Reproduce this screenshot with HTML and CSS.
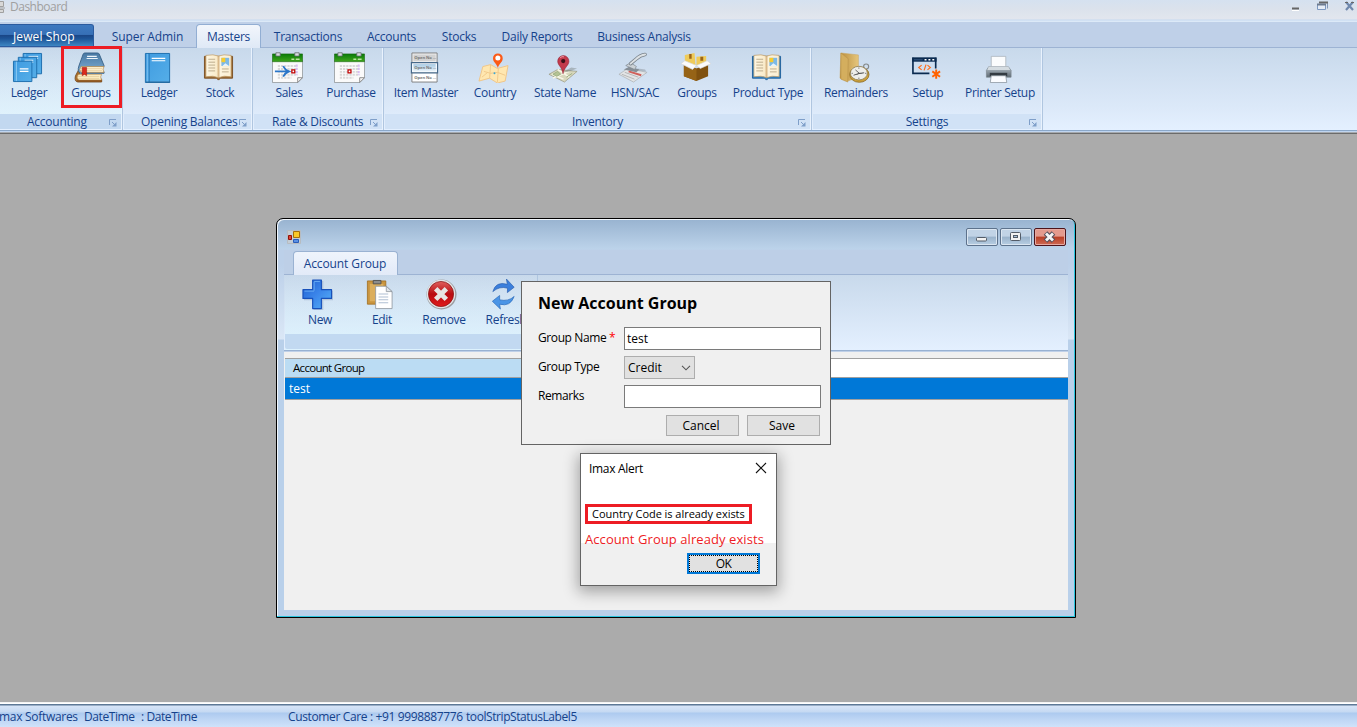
FILE: index.html
```html
<!DOCTYPE html>
<html lang="en">
<head>
<meta charset="utf-8">
<title>Dashboard</title>
<link rel="stylesheet" href="styles.css">
</head>
<body>
<svg class="defs" width="0" height="0">
  <defs>
    <linearGradient id="gBlue" x1="0" y1="0" x2="1" y2="1"><stop offset="0" stop-color="#3f9be0"/><stop offset="1" stop-color="#55aee8"/></linearGradient>
    <linearGradient id="gCover" x1="0" y1="0" x2="0" y2="1"><stop offset="0" stop-color="#4878a3"/><stop offset="1" stop-color="#7fadd2"/></linearGradient>
    <linearGradient id="gGreen" x1="0" y1="0" x2="0" y2="1"><stop offset="0" stop-color="#087b08"/><stop offset="1" stop-color="#3fa51c"/></linearGradient>
    <linearGradient id="gPlus" x1="0" y1="0" x2="1" y2="1"><stop offset="0" stop-color="#1d5fd0"/><stop offset=".5" stop-color="#3c86ea"/><stop offset="1" stop-color="#57b3f8"/></linearGradient>
    <linearGradient id="gFolder" x1="0" y1="0" x2="1" y2="0"><stop offset="0" stop-color="#b98d3c"/><stop offset="1" stop-color="#e6c67c"/></linearGradient>
    <linearGradient id="gMetal" x1="0" y1="0" x2="0" y2="1"><stop offset="0" stop-color="#b9c4cd"/><stop offset="1" stop-color="#5d6973"/></linearGradient>
    <linearGradient id="gRed" x1="0" y1="0" x2="0" y2="1"><stop offset="0" stop-color="#e0605c"/><stop offset=".5" stop-color="#b80c10"/><stop offset="1" stop-color="#e01a1c"/></linearGradient>
    <linearGradient id="gPage" x1="0" y1="0" x2="1" y2="0"><stop offset="0" stop-color="#fdf6e3"/><stop offset=".42" stop-color="#faeccb"/><stop offset=".5" stop-color="#d9b98a"/><stop offset=".58" stop-color="#fdf4de"/><stop offset="1" stop-color="#fbeed2"/></linearGradient>
    <linearGradient id="gCell" x1="0" y1="0" x2="0" y2="1"><stop offset="0" stop-color="#a9cbe4"/><stop offset="1" stop-color="#e4f0f9"/></linearGradient>
  </defs>
  <symbol id="i-ledgers" viewBox="0 0 32 32">
    <g stroke="#1f6fae" fill="url(#gBlue)">
      <path d="M11.500 1.500H30.500V22.500H11.500z"/><path d="M13.500 2v20" stroke="#8fcbf4" stroke-width=".8"/><path d="M17 4.500h10M17 6.500h10" stroke="#e8f6ff"/>
      <path d="M6.500 5.500H25.500V26.500H6.500z"/><path d="M8.500 6v20" stroke="#8fcbf4" stroke-width=".8"/><path d="M13 8.500h9M13 10.500h9" stroke="#e8f6ff"/>
      <path d="M1.500 9.500H20.500V30.500H1.500z"/><path d="M4.500 10v20" stroke="#8fcbf4"/><path d="M8 17.500h9M8 20h9" stroke="#fff" stroke-width="1.300"/>
    </g>
  </symbol>
  <symbol id="i-ledger" viewBox="0 0 32 32">
    <path d="M3.500 1.500h25v30h-25z" fill="url(#gBlue)" stroke="#1f6fae"/><path d="M7.500 2v29" stroke="#2f7fbd"/><path d="M5.500 2v29" stroke="#7cc0ef"/>
    <path d="M10 6.500h14M10 9h14" stroke="#fff" stroke-width="1.200"/><path d="M4 31h25" stroke="#2a6594"/>
  </symbol>
  <symbol id="i-books" viewBox="0 0 32 32">
    <path d="M5 18 1.500 24.500Q0 30.500 4 31H28.500V28H6V23z" fill="#a8702e" stroke="#6f451a" stroke-width=".8"/>
    <path d="M5 23h23.500q-2 2.500 0 6H5q-3.500-3 0-6z" fill="#fdeec4" stroke="#b98a48" stroke-width=".7"/><path d="M4 25.200h22M4 27.200h22" stroke="#dcbd85" stroke-width=".6"/><path d="M3 30h26" stroke="#8a5420" stroke-width="1.500"/>
    <path d="M5 14.500 9.500 2Q10 1 11.500 1h12.500q1.500 0 2 1l5 12v1H8v5.500h23V22H7Q3 20.500 5 14.500z" fill="url(#gCover)" stroke="#365e84" stroke-width=".9"/>
    <path d="M7.500 15H31q-2 2.500 0 6H7.500q-3-3 0-6z" fill="#fdf0ce" stroke="#b98a48" stroke-width=".7"/><path d="M7 17h22M7 19h22" stroke="#dfc391" stroke-width=".6"/>
    <path d="M13.500 4.500h10M13 6.800h11.500" stroke="#eef5fb" stroke-width="1.100"/><path d="M8.500 16h4.500v8.500l-2.200-1.500-2.300 1.500z" fill="#dc2a1c" stroke="#a3170e" stroke-width=".6"/>
  </symbol>
  <symbol id="i-book" viewBox="0 0 32 32">
    <path d="M1.500 4.500h29v22.500H18l-2 2-2-2H1.500z" fill="#a3713a" stroke="#7c5226"/>
    <path d="M3 3.500q8-1.500 13 .7 5-2.200 13-.7v22q-8-1.500-13 1-5-2.500-13-1z" fill="url(#gPage)" stroke="#b99560" stroke-width=".7"/>
    <path d="M5.500 7.500h7M5.500 10.500h7M5.500 13.500h7M5.500 16.500h7M5.500 19.500h7M19.500 17.500h7M19.500 20.500h7" stroke="#b5a484" stroke-width=".9"/>
    <path d="M19 6h8v8.500h-8z" fill="#7db9e6"/><path d="M19 6h4v4.500h-4z" fill="#f6cb2e"/><path d="m20 14.500 3-3 4 3z" fill="#e7f3fb"/>
  </symbol>
  <symbol id="i-bluebook" viewBox="0 0 32 32">
    <path d="M1.500 4.500h29v22.500H18l-2 2-2-2H1.500z" fill="#3787c8" stroke="#22629d"/>
    <path d="M3 3.500q8-1.500 13 .7 5-2.200 13-.7v22q-8-1.500-13 1-5-2.500-13-1z" fill="url(#gPage)" stroke="#b99560" stroke-width=".7"/>
    <path d="M5.500 7.500h7M5.500 10.500h7M5.500 13.500h7M5.500 16.500h7M5.500 19.500h7M19.500 17.500h7M19.500 20.500h7" stroke="#b5a484" stroke-width=".9"/>
    <path d="M19 6h8v8.500h-8z" fill="#7db9e6"/><path d="M19 6h4v4.500h-4z" fill="#f6cb2e"/><path d="m20 14.500 3-3 4 3z" fill="#e7f3fb"/>
  </symbol>
  <symbol id="i-cal" viewBox="0 0 32 32">
    <path d="M.5 9h31v17.500l-5 5H.5z" fill="#fafafa" stroke="#8f9396" stroke-width=".8"/><path d="M.5 2h31v8H.5z" fill="url(#gGreen)" stroke="#19650f" stroke-width=".6"/>
    <path d="M26.500 31.500v-5h5z" fill="#f4f4f4" stroke="#777" stroke-width=".8"/><path d="M4 .8h4.500v3.400H4zM23.500.8H28v3.400h-4.500z" fill="#d9dde0" stroke="#5e666b" stroke-width=".8"/>
    <path d="M20 7.500h3M24.500 7.500h4" stroke="#b8e4a0" stroke-width="1.500"/>
    <path d="M6 14.500h20M6 17.500h20M6 20.500h20M6 23.500h20M6 26.500h14" stroke="#d9d9d9" stroke-width="2" stroke-dasharray="2.300 1"/><path d="M25.500 13v11" stroke="#d7bdf4" stroke-width="2" stroke-dasharray="2.300 1"/>
    <path d="M14.500 18.500h3v3h-3z" fill="#fff" stroke="#c00000" stroke-width="1.300"/>
  </symbol>
  <symbol id="i-calarrow" viewBox="0 0 32 32">
    <path d="M.5 9h31v17.500l-5 5H.5z" fill="#fafafa" stroke="#8f9396" stroke-width=".8"/><path d="M.5 2h31v8H.5z" fill="url(#gGreen)" stroke="#19650f" stroke-width=".6"/>
    <path d="M26.500 31.500v-5h5z" fill="#f4f4f4" stroke="#777" stroke-width=".8"/><path d="M4 .8h4.500v3.400H4zM23.500.8H28v3.400h-4.500z" fill="#d9dde0" stroke="#5e666b" stroke-width=".8"/>
    <path d="M20 7.500h3M24.500 7.500h4" stroke="#b8e4a0" stroke-width="1.500"/>
    <path d="M6 14.500h20M6 17.500h20M6 20.500h20M6 23.500h20M6 26.500h14" stroke="#d9d9d9" stroke-width="2" stroke-dasharray="2.300 1"/><path d="M25.500 13v11" stroke="#d7bdf4" stroke-width="2" stroke-dasharray="2.300 1"/>
    <path d="M3 20h14M11.500 14.500q2 4 6 5.500-4 1.500-6 5.500" fill="none" stroke="#2a76c8" stroke-width="1.900"/><path d="M20.500 18.500h3v3h-3z" fill="#fff" stroke="#c00000" stroke-width="1.300"/>
  </symbol>
  <symbol id="i-country" viewBox="0 0 32 32">
    <path d="m5 15 8-2 7 4 11-3-3 16-8 2-8-5-11 3z" fill="#ffe7b0" stroke="#efc588"/><path d="m13 13-1 14M21 17l-1 14M6 20l7 2 7-1 8 3M4 26l6-5" fill="none" stroke="#f1c98a"/>
    <path d="M20.500 16.500C19.500 12 15.500 11 15.500 6.500a5 5 0 0 1 10 0C25.500 11 21.500 12 20.500 16.500z" fill="#fb5a17"/><circle cx="20.500" cy="6.300" r="2.600" fill="#fff"/><circle cx="17" cy="22" r="1" fill="#38a8d8"/>
  </symbol>
  <symbol id="i-state" viewBox="0 0 32 32">
    <path d="m1 23 9-5 20 2-13 11z" fill="#d9d8bd" stroke="#96947b" stroke-width=".7"/><path d="m4 23 12 5M10 18l12 8M5 27l17-7" stroke="#f9f8e8" stroke-width="1.500"/><path d="m5 23 5-3 3 3-4 2zM19 26l6-4" fill="#b5c394" stroke="#9db082"/>
    <path d="m16 20 8-4 6 1-10 4z" fill="#77817f" opacity=".45"/><path d="M15.500 22.500C14.500 15 10 14 10 9.500a5.800 5.800 0 0 1 11.600 0C21.600 14 16.500 16 15.500 22.500z" fill="#c23a4c" stroke="#8e172a" stroke-width=".5"/><circle cx="15.700" cy="9.300" r="2.200" fill="#3a1018"/><path d="M12.500 6q2-2 4-1" stroke="#ef9aa6" fill="none"/>
  </symbol>
  <symbol id="i-hsn" viewBox="0 0 32 32">
    <path d="m1 23 9-6 20 4-14 10z" fill="#e2e4e6" stroke="#a9adb0" stroke-width=".7"/><path d="m4 23 13 5M7 21l14 5" stroke="#aaa" stroke-width=".8"/><path d="m11 20 13 4" stroke="#d0605a" stroke-width="2"/><path d="m20 17 8 1 1 2-8-1z" fill="#8c949b" opacity=".5"/>
    <path d="m6 18 6-3 10 3-3 3z" fill="#868e95"/><path d="m8 14 5-3 6 4-2 3z" fill="#ccd2d6" stroke="#7b848b" stroke-width=".7"/><path d="m13 12 6-5q4-4 9-4.500" fill="none" stroke="#79828a" stroke-width="3.600" stroke-linecap="round"/><path d="m13 12 6-5q4-4 9-4.500" fill="none" stroke="#dce1e4" stroke-width="2" stroke-linecap="round"/>
  </symbol>
  <symbol id="i-box" viewBox="0 0 32 32">
    <path d="m5 3 10-2 1 13H5zM17 5l10-1v10H17z" fill="#efcb5a"/><path d="M9.500 2h2.500v5H9.500zM21 5h3v4h-3z" fill="#9b6417"/><path d="m4 12 13 5 12-5v13l-12 5-13-5z" fill="#80510f"/><path d="m4 12 13 5v13L4 25z" fill="#966316"/>
    <path d="m5 9 12 5-4 4L1 12zM17 14l11-5 4 3-11 5z" fill="#fbfbfb" stroke="#d5d8dc" stroke-width=".7"/>
  </symbol>
  <symbol id="i-rem" viewBox="0 0 32 32">
    <path d="m2 1 18 2v23L9 30 1 27z" fill="url(#gFolder)" stroke="#c9a154" stroke-width=".5"/><path d="m2 1 7.500 6-.5 24-7-3z" fill="#d4ae5e" stroke="#b8914a" stroke-width=".6"/>
    <circle cx="28" cy="15" r="2.600" fill="none" stroke="#858989" stroke-width="1.200"/><ellipse cx="21" cy="23.300" rx="10" ry="8" fill="#cba03a" stroke="#8c6a24" stroke-width=".8"/><ellipse cx="20.500" cy="21.800" rx="8.800" ry="7" fill="#eeeeea" stroke="#8a7a50" stroke-width=".8"/><path d="m21 22-4-3.500M15 24l6-2 5-.5M20.500 16v1.200M20.500 26.500v1.200M13 22h1.200M27 22h1.200" stroke="#555" stroke-width=".9"/>
  </symbol>
  <symbol id="i-setup" viewBox="0 0 32 32">
    <path d="M25.500 6v11M19 22H2V6" fill="none" stroke="#0a2a50" stroke-width="1.700"/><path d="M1.200 5.500h25.200V10H1.200z" fill="#0a2a50"/><path d="M3 8h9" stroke="#2e5079" stroke-width="1.300"/><path d="M14 8h2M18 8h2M22 8h2" stroke="#fff" stroke-width="1.500"/>
    <path d="m11 13.500-3 2.500 3 2.500M15.500 13l-2 6M17 13.500l3 2.500-3 2.500" fill="none" stroke="#ff6b18" stroke-width="1.200"/><path d="M26 18v9.500M22 20l8 5.500M22 25.500l8-5.500" stroke="#ff6200" stroke-width="2"/>
  </symbol>
  <symbol id="i-printer" viewBox="0 0 32 32">
    <path d="M8.500 4.500h15V16h-15z" fill="#fbfcfd" stroke="#aab3bb" stroke-width=".8"/><path d="M6 15h20l3 4v7H3.500v-7z" fill="url(#gMetal)" stroke="#7b858d" stroke-width=".7"/><path d="M6 15h20l2 3.500H4.500z" fill="#d5dce1"/><path d="M7 21.500h18V25H7z" fill="#333b42"/><path d="M8.500 24.500h15l1 7h-17z" fill="#fafcff" stroke="#8b959e" stroke-width=".8"/>
  </symbol>
  <symbol id="i-new" viewBox="0 0 32 32"><path d="M11 1h10v10h10v10H21v10H11V21H1V11h10z" fill="#8395b5" opacity=".4" transform="translate(1 1)"/><path d="M11 1h9v10h10.500v9H20v10.500h-9V20H1v-9h10z" fill="url(#gPlus)" stroke="#1851ba" stroke-width="1.200" stroke-linejoin="round"/><path d="M12.500 2.500h6M2.500 12.500h10M12.500 12V3" stroke="#69acf3" fill="none"/></symbol>
  <symbol id="i-edit" viewBox="0 0 32 32"><path d="M3.500 2h19v24h-19z" fill="#c9953f" stroke="#a06c1c" stroke-width=".8"/><path d="M6 5h14v18H6z" fill="#dcae5c"/><path d="M9.500 1.500h8v3.500h-8z" fill="#8d8d8d" stroke="#555"/><path d="M12 7.500h11l6 5.500v17.500H12z" fill="#fff" stroke="#8b929a" stroke-width=".8"/><path d="M23 7.500V13h6z" fill="#dfe5eb" stroke="#8b929a" stroke-width=".8"/><path d="M15 15.500h10M15 18.500h10M15 21.500h10M15 24.500h10" stroke="#b0c0d4" stroke-width="1.100"/></symbol>
  <symbol id="i-remove" viewBox="0 0 32 32"><circle cx="16" cy="16" r="15.500" fill="#9a9da1"/><circle cx="15.500" cy="15.500" r="14.700" fill="#e2e4e6"/><circle cx="15.500" cy="15.500" r="13" fill="url(#gRed)" stroke="#820d0e" stroke-width=".7"/><path d="m10 10 11 11M21 10 10 21" stroke="#e7e5e2" stroke-width="5"/></symbol>
  <symbol id="i-refresh" viewBox="0 0 32 32"><path d="M5 13Q8 2 20 5.500L19 0l8 8.500-7 5.500.2-4.500Q12 7 5 13z" fill="#3b7fdc" stroke="#2a5faf" stroke-width=".7"/><path d="M27 18Q23 29 12 26l.8 5-8.300-8 7.500-6v4.500q9 2 15-3.500z" fill="#4b95e6" stroke="#2a69b9" stroke-width=".7"/></symbol>
  <symbol id="i-launch" viewBox="0 0 8 8"><path d="M.5 6V.5H7" fill="none" stroke="#7f9fc9"/><path d="m3 3 3 3" stroke="#7f9fc9"/><path d="M7.500 3v4.500H3z" fill="#7f9fc9"/></symbol>
  <symbol id="i-form" viewBox="0 0 14 14"><path d="M.5.5h13v13H.500z" fill="#c4cdd5" stroke="#b7bcc1"/><path d="M6.500 1.500h6v6h-6z" fill="#f9c827" stroke="#a66f0b"/><path d="M1.500 5.500h3v4h-3z" fill="#df4634" stroke="#930f08"/><path d="M6.500 9.500h5v3h-5z" fill="#5a91e5" stroke="#2a5eb8"/></symbol>
</svg>

<header class="titlebar">
  <svg class="app-icon" width="6" height="14" viewBox="0 0 6 14"><path d="M0 1.500h4.500v5H0M0 9.500h4.500v3H0M1 8h5" fill="#d8d8d8" stroke="#a0a0a0"/></svg>
  <span class="app-title">Dashboard</span>
  <svg class="app-controls" width="66" height="12" viewBox="0 0 66 12">
    <path d="M1 8.500h7" stroke="#666" stroke-width="2"/><path d="M1 10.500h7" stroke="#fff"/>
    <path d="M28.500 2.500h8v6" fill="none" stroke="#8095b5"/><path d="M28 2.500h9" stroke="#666" stroke-width="2"/><path d="M26.500 4.500h8v5h-8z" fill="#e6ecf5" stroke="#7d98c0"/><path d="M26 4.500h9" stroke="#6c7b90" stroke-width="2"/>
    <path d="m55 2 7 8M62 2l-7 8" stroke="#6f88ad" stroke-width="2.200"/><path d="M54 2.500h3M60 2.500h3" stroke="#666"/>
  </svg>
</header>

<nav class="tabs">
  <span class="orb">Jewel Shop</span>
  <span class="tab t-admin">Super Admin</span>
  <span class="tab t-masters active">Masters</span>
  <span class="tab t-trans">Transactions</span>
  <span class="tab t-acc">Accounts</span>
  <span class="tab t-stocks">Stocks</span>
  <span class="tab t-daily">Daily Reports</span>
  <span class="tab t-biz">Business Analysis</span>
</nav>

<section class="ribbon">
  <div class="group g-accounting">
    <div class="items">
      <div class="item w58"><svg><use href="#i-ledgers"/></svg><span>Ledger</span></div>
      <div class="item w66"><svg><use href="#i-books"/></svg><span>Groups</span><i class="mark"></i></div>
    </div>
    <div class="caption"><span>Accounting</span><svg><use href="#i-launch"/></svg></div>
  </div>
  <div class="group g-opening">
    <div class="items">
      <div class="item w62"><svg><use href="#i-ledger"/></svg><span>Ledger</span></div>
      <div class="item w60"><svg><use href="#i-book"/></svg><span>Stock</span></div>
    </div>
    <div class="caption"><span>Opening Balances</span><svg><use href="#i-launch"/></svg></div>
  </div>
  <div class="group g-rate">
    <div class="items">
      <div class="item w62"><svg><use href="#i-calarrow"/></svg><span>Sales</span></div>
      <div class="item w62"><svg><use href="#i-cal"/></svg><span>Purchase</span></div>
    </div>
    <div class="caption"><span>Rate &amp; Discounts</span><svg><use href="#i-launch"/></svg></div>
  </div>
  <div class="group g-inventory">
    <div class="items">
      <div class="item w74">
        <svg viewBox="0 0 32 32">
          <path d="M3 1h26v10H3z" fill="#f2f2f2" stroke="#808080"/><path d="M4.500 2.500h23v7h-23z" fill="#d2d2d2"/><path d="M3 21h26v10H3z" fill="#fff" stroke="#808080"/><path d="M2.500 11h27v10.500h-27z" fill="#f4f9fd" stroke="#47698a" stroke-width="1.200"/><path d="M4.500 12.500h23v7h-23z" fill="url(#gCell)"/>
          <g class="tiny"><text x="5.500" y="7.700">Open No ...</text><text x="5.500" y="17.700">Open No ...</text><text x="5.500" y="27.700">Open No ...</text></g>
        </svg>
        <span>Item Master</span>
      </div>
      <div class="item w64"><svg><use href="#i-country"/></svg><span>Country</span></div>
      <div class="item w76"><svg><use href="#i-state"/></svg><span>State Name</span></div>
      <div class="item w64"><svg><use href="#i-hsn"/></svg><span>HSN/SAC</span></div>
      <div class="item w60"><svg><use href="#i-box"/></svg><span>Groups</span></div>
      <div class="item w82"><svg><use href="#i-bluebook"/></svg><span>Product Type</span></div>
    </div>
    <div class="caption"><span>Inventory</span><svg><use href="#i-launch"/></svg></div>
  </div>
  <div class="group g-settings">
    <div class="items">
      <div class="item w70"><svg><use href="#i-rem"/></svg><span>Remainders</span></div>
      <div class="item w74"><svg><use href="#i-setup"/></svg><span>Setup</span></div>
      <div class="item w70"><svg><use href="#i-printer"/></svg><span>Printer Setup</span></div>
    </div>
    <div class="caption"><span>Settings</span><svg><use href="#i-launch"/></svg></div>
  </div>
</section>

<main class="desktop">
  <section class="window">
    <div class="win-title">
      <svg class="win-icon" width="14" height="14"><use href="#i-form"/></svg>
      <div class="win-buttons">
        <b><svg width="30" height="16"><rect x="9.500" y="8.500" width="10" height="3.500" rx="1" fill="#f2f2f2" stroke="#535c68"/></svg></b>
        <b><svg width="30" height="16"><rect x="9.500" y="3.500" width="10" height="8" rx="1" fill="#f2f2f2" stroke="#535c68"/><rect x="12.500" y="6.500" width="4" height="2" fill="#a9c0d8" stroke="#535c68"/></svg></b>
        <b class="close"><svg width="30" height="16"><path d="m10.500 4 8 8M18.500 4l-8 8" stroke="#56505c" stroke-width="5"/><path d="m11 4.500 7 7M18 4.500l-7 7" stroke="#f4f4f4" stroke-width="2.800"/></svg></b>
      </div>
    </div>
    <div class="win-body">
      <div class="win-tabs"><span class="win-tab">Account Group</span></div>
      <div class="win-ribbon">
        <div class="win-group">
          <div class="win-items">
            <div class="item"><svg><use href="#i-new"/></svg><span>New</span></div>
            <div class="item"><svg><use href="#i-edit"/></svg><span>Edit</span></div>
            <div class="item"><svg><use href="#i-remove"/></svg><span>Remove</span></div>
            <div class="item"><svg><use href="#i-refresh"/></svg><span>Refresh</span></div>
          </div>
          <div class="win-caption"></div>
        </div>
      </div>
      <div class="grid">
        <div class="grid-head"><span>Account Group</span></div>
        <div class="grid-row">test</div>
      </div>
    </div>
  </section>

  <section class="popup">
    <h2>New Account Group</h2>
    <div class="field"><label>Group Name <em>*</em></label><div class="input">test</div></div>
    <div class="field"><label>Group Type</label><div class="select">Credit<svg width="10" height="6" viewBox="0 0 10 6"><path d="m1 .8 4 4 4-4" fill="none" stroke="#555" stroke-width="1.100"/></svg></div></div>
    <div class="field"><label>Remarks</label><div class="input"></div></div>
    <div class="actions"><button>Cancel</button><button>Save</button></div>
  </section>

  <section class="alert">
    <div class="alert-top">
      <div class="alert-title"><span>Imax Alert</span><svg width="12" height="12" viewBox="0 0 12 12"><path d="m1 1 10 10M11 1 1 11" stroke="#111" stroke-width="1.100"/></svg></div>
      <div class="alert-msg">Country Code is already exists</div>
      <div class="alert-note">Account Group already exists</div>
    </div>
    <div class="alert-foot"><button>OK</button></div>
  </section>
</main>

<footer class="status">
  <span class="s1">Imax Softwares</span><span class="s2">DateTime</span><span class="s3">: DateTime</span><span class="s4">Customer Care : +91 9998887776</span><span class="s5">toolStripStatusLabel5</span>
</footer>
</body>
</html>
```
FILE: styles.css
```css
* { box-sizing: border-box; }
body {
  margin: 0;
  width: 1357px;
  height: 727px;
  overflow: hidden;
  display: flex;
  flex-direction: column;
  background: #ababab;
  color: #15428b;
  font: 12px/16px "Open Sans", "Noto Sans", sans-serif;
  letter-spacing: -0.25px;
  white-space: nowrap;
}
.defs { position: absolute; }

.titlebar {
  height: 22px;
  flex: none;
  display: flex;
  background: linear-gradient(#d5e1f0, #dbe2ec 40%, #e2e6ee 19px, #c6d9f0 20px, #dce9f7 21px);
}
.app-icon { flex: none; margin-left: -1px; }
.app-title { margin-left: 5px; line-height: 14px; color: #a0a0a0; letter-spacing: -.5px; }
.app-controls { margin-left: auto; }

.tabs {
  height: 26px;
  flex: none;
  display: flex;
  background: #bfd0e8;
  border-bottom: 1px solid #9db3d3;
}
.orb {
  width: 94px;
  margin-top: 2px;
  height: 23px;
  padding: 4px 0 0 13px;
  color: #fff;
  border: 1px solid #2b5b9f;
  border-left: 0;
  border-radius: 0 3px 0 0;
  background: linear-gradient(#3c78bf, #3770b7 45%, #1a4788 50%, #1d5497 65%, #3d86c3);
  letter-spacing: 0.1px;
}
.tab { height: 24px; margin-top: 2px; padding-top: 5px; text-align: center; }
.tab.active {
  height: 24px;
  border: 1px solid #92aed3;
  border-bottom: 0;
  border-radius: 4px 4px 0 0;
  background: linear-gradient(#f2f6fc, #dfe9f6);
  padding-top: 4px;
  box-shadow: 0 1px #dbe7f5;
}
.t-admin { width: 102px; padding-left: 5px; letter-spacing: -.1px; }
.t-masters { width: 65px; }
.t-trans { width: 94px; }
.t-acc { width: 73px; }
.t-stocks { width: 62px; }
.t-daily { width: 94px; }
.t-biz { width: 120px; }

.ribbon {
  height: 86px;
  flex: none;
  display: flex;
  background: linear-gradient(#c8d9eb, #dce9f9 60px, #e4f0ff 82px, #8ba8ca 82px, #8ba8ca 83px, #bfd5f0 83px, #bfd5f0 84px, #a5a9ae 84px, #a5a9ae 85px, #6b6b6b 85px);
}
.group {
  height: 82px;
  display: flex;
  flex-direction: column;
  border-right: 1px solid #b0c6e0;
  box-shadow: inset -1px 0 #e9f2fd;
}
.items { height: 66px; display: flex; }
.item { height: 62px; flex: none; display: flex; flex-direction: column; align-items: center; position: relative; }
.item svg { width: 31px; height: 31px; margin: 4px 3px 1px 0; flex: none; }
.item span { margin-top: 1px; letter-spacing: -.3px; }
.tiny { font: 700 4.300px "Open Sans", sans-serif; letter-spacing: -.1px; fill: #777; }
.g-accounting { width: 123px; }
.g-accounting .items { background: linear-gradient(transparent, rgba(225, 248, 253, .5)); }
.g-opening { width: 130px; padding-left: 5px; }
.g-rate { width: 131px; padding-left: 5px; }
.g-inventory { width: 428px; padding-left: 5px; }
.g-settings { width: 231px; padding-left: 9px; }
.w58 { width: 58px; }
.w60 { width: 60px; }
.w62 { width: 62px; }
.w64 { width: 64px; }
.w66 { width: 66px; }
.w70 { width: 70px; }
.w74 { width: 74px; }
.w76 { width: 76px; }
.w82 { width: 82px; }
.mark { position: absolute; left: 3px; top: -2px; width: 61px; height: 62px; border: 3px solid #ed1c24; }
.caption {
  height: 15px;
  margin: 0 1px 0 -4px;
  display: flex;
  align-items: center;
  justify-content: center;
  background: #d1e2f6;
}
.g-accounting .caption { margin-left: 0; background: #c2d8f0; }
.g-settings .caption { margin-left: -8px; }
.caption span { margin-left: auto; line-height: 15px; margin-top: -1px; }
.caption svg { width: 8px; height: 8px; margin: 2px 4px 0 auto; }
.g-inventory .caption, .g-settings .caption { padding-left: 12px; }
.g-accounting .caption span { margin-left: 27px; }
.g-opening .caption span { margin-left: 17px; }
.g-rate .caption span { margin-left: 18px; }

.desktop { flex: 1; position: relative; }

.window {
  position: absolute;
  left: 276px;
  top: 84px;
  width: 800px;
  height: 400px;
  padding: 0 7px 7px 7px;
  border: 1px solid #000;
  border-radius: 7px 7px 0 0;
  background: linear-gradient(#98b3d0, #bcd3ea 30px, #bcd0e9 31px, #bcd0e9 45px, #dae7f6 120px, #b9d0ea 121px);
  box-shadow: inset -1px -1px #29c5de, inset 1px 1px #f2f7fc;
}
.win-title { height: 31px; display: flex; padding: 9px 2px 0 3px; }
.win-icon { margin-top: 2px; }
.win-buttons { margin-left: auto; display: flex; gap: 2px; }
.win-buttons b {
  width: 32px;
  height: 18px;
  border: 1px solid #5d728c;
  border-radius: 2px;
  box-shadow: inset 0 0 0 1px #dbe6f1;
  background: linear-gradient(#c1d3e6 45%, #99b2cb 50%, #b8cfe3);
}
.win-buttons .close { border-color: #4d141b; box-shadow: inset 0 0 0 1px #e6aaa2; background: linear-gradient(#e49a8d 45%, #b93e25 50%, #ce6c55); }
.win-buttons svg { display: block; }
.win-body { height: 360px; width: 784px; background: #f0f0f0; }
.win-tabs { height: 25px; background: #bdcfe7; border-bottom: 1px solid #9db3d3; padding: 1px 0 0 9px; }
.win-tab {
  display: block;
  width: 105px;
  height: 24px;
  border: 1px solid #9ab2d2;
  border-bottom: 0;
  border-radius: 4px 4px 0 0;
  background: linear-gradient(#eff4fc, #e2eaf8);
  text-align: center;
  padding: 4px 1px 0 0;
  letter-spacing: -.1px;
}
.win-ribbon { height: 77px; border-bottom: 1px solid #bfd0e8; box-shadow: inset 0 -1px #98b1d2; background: linear-gradient(#c8d9eb, #e4f0ff); padding-left: 1px; }
.win-group { width: 253px; height: 75px; border-right: 1px solid #b0c6e0; background: linear-gradient(transparent, rgba(218, 245, 253, .6)); }
.win-items { display: flex; height: 59px; padding-left: 3px; }
.win-items .item { width: 62px; padding-left: 2px; }
.win-items .item svg { margin-right: 6px; }
.win-caption { height: 15px; background: #c2d9f1; border-radius: 0 0 2px 2px; }
.grid { margin: 6px 0 0 1px; border-top: 1px solid #a0a0a0; }
.grid-head { height: 19px; background: #fff; border-bottom: 1px solid #a0a0a0; }
.grid-head span { display: block; width: 300px; height: 18px; padding: 1px 0 0 8px; background: #bbdcf3; color: #000; font-size: 11.500px; letter-spacing: -.7px; }
.grid-row { height: 22px; padding: 3px 0 0 4px; background: #0078d7; border-bottom: 1px solid #a0a0a0; color: #fff; letter-spacing: 0; }

.popup {
  position: absolute;
  left: 521px;
  top: 147px;
  width: 310px;
  height: 164px;
  padding: 10px 9px 0 16px;
  border: 1px solid #646464;
  background: #f0f0f0;
  color: #000;
  letter-spacing: 0;
}
.popup h2 { margin: 0 0 12px; font-size: 16px; line-height: 23px; font-weight: 700; letter-spacing: 0; }
.field { display: flex; height: 23px; margin-bottom: 6px; }
.field label { width: 86px; line-height: 22px; letter-spacing: -.4px; }
.field em { color: #f00; font-style: normal; }
.input { width: 197px; height: 23px; border: 1px solid #7a7a7a; background: #fff; padding: 3px 2px; line-height: 16px; }
.select { width: 71px; height: 23px; border: 1px solid #adadad; background: #e1e1e1; padding: 0 3px; display: flex; justify-content: space-between; align-items: center; }
.actions { display: flex; justify-content: flex-end; gap: 8px; padding-right: 1px; margin-top: 1px; }
button { width: 73px; height: 21px; padding: 1px 3px 0 0; border: 1px solid #adadad; background: #e1e1e1; color: #000; font: 12px/16px "Open Sans", sans-serif; }
.actions button { margin-top: 1px; }

.alert {
  position: absolute;
  left: 580px;
  top: 319px;
  width: 197px;
  height: 133px;
  border: 1px solid #646464;
  background: #f0f0f0;
  color: #000;
  box-shadow: 0 4px 14px 2px rgba(0, 0, 0, .32);
}
.alert-top { height: 89px; background: #fff; padding: 7px 0 0 4px; }
.alert-title { display: flex; justify-content: space-between; padding: 0 9px 0 4px; height: 43px; letter-spacing: -.3px; }
.alert-title svg { margin-top: 1px; }
.alert-msg { width: 167px; height: 20px; border: 3px solid #ed1c24; padding-left: 4px; font-size: 11px; line-height: 14px; letter-spacing: -.04px; }
.alert-note { color: #ed1c24; font-size: 13px; line-height: 18px; margin-top: 6px; letter-spacing: .07px; }
.alert-foot { display: flex; justify-content: flex-end; padding: 10px 16px 0 0; }
.alert-foot button { border: 2px solid #0078d7; padding: 0; outline: 1px dotted #000; outline-offset: -3px; letter-spacing: -.5px; }

.status {
  height: 25px;
  flex: none;
  display: flex;
  padding-top: 7px;
  background: linear-gradient(#f4f4f4 1px, #fff 1px, #fff 2px, #5d7896 2px, #5d7896 3px, #d6e4f7 4px, #c5d9f2 10px, #adcaef 11px, #bdd5f4 17px, #cfe2fa);
  letter-spacing: -.42px;
}
.status span { flex: none; }
.s1 { width: 88px; margin-left: -4px; letter-spacing: -.3px; }
.s2 { width: 57px; }
.s3 { width: 147px; }
.s4 { width: 178px; letter-spacing: -.36px; }
```
